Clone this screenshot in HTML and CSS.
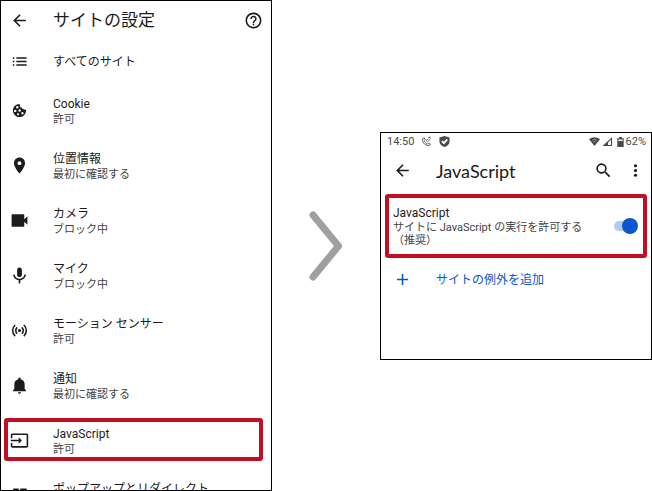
FILE: index.html
```html
<!DOCTYPE html>
<html lang="ja">
<head>
<meta charset="utf-8">
<meta name="viewport" content="width=device-width, initial-scale=1">
<title>サイトの設定</title>
<link rel="stylesheet" href="styles.css">
</head>
<body>
<main class="steps">
  <section class="panel panel-list">
    <header class="bar">
      <button class="icon-button" type="button" aria-label="戻る"><svg class="icon" viewBox="0 0 24 24"><path d="M20 11H7.83l5.59-5.59L12 4l-8 8 8 8 1.41-1.41L7.83 13H20z"/></svg></button>
      <h1 class="title">サイトの設定</h1>
      <button class="icon-button" type="button" aria-label="ヘルプ"><svg class="icon" viewBox="0 0 24 24"><path d="M11 18h2v-2h-2zm1-16C6.48 2 2 6.48 2 12s4.48 10 10 10 10-4.48 10-10S17.52 2 12 2zm0 18c-4.41 0-8-3.59-8-8s3.59-8 8-8 8 3.59 8 8-3.59 8-8 8zm0-14c-2.21 0-4 1.79-4 4h2c0-1.1.9-2 2-2s2 .9 2 2c0 2-3 1.75-3 5h2c0-2.25 3-2.5 3-5 0-2.21-1.79-4-4-4z"/></svg></button>
    </header>
    <nav class="list">
      <a class="item item-single" href="#all">
        <svg class="icon" viewBox="0 0 24 24"><path d="M3.500 6.500h2v2h-2zm0 4.500h2v2h-2zm0 4.500h2v2h-2zM8 6.500h13v2H8zM8 11h13v2H8zm0 4.500h13v2H8z"/></svg>
        <span class="text"><span class="name">すべてのサイト</span></span>
      </a>
      <a class="item" href="#cookie">
        <svg class="icon" viewBox="-1 -1 26 26"><path fill-rule="evenodd" d="M12 3a9 9 0 1 0 9 9c0-.5 0-.8-.1-1.100-.8.3-1.900.2-2.800-.7-1.500.3-2.800-.5-2.800-2.300-1.900.2-3.200-1.300-2.700-3.200-.4-.5-.6-1-.6-1.700zM9 6a1.700 1.700 0 1 1 0 3.400A1.700 1.700 0 0 1 9 6zm-2.800 5a1.600 1.600 0 1 1 0 3.200 1.600 1.600 0 0 1 0-3.200zm6-.6a1.700 1.700 0 1 1 0 3.400 1.700 1.700 0 0 1 0-3.400zM10 15.600a1.500 1.500 0 1 1 0 3 1.500 1.500 0 0 1 0-3zm6-1.400a1.600 1.600 0 1 1 0 3.200 1.600 1.600 0 0 1 0-3.200z"/></svg>
        <span class="text"><span class="name">Cookie</span><span class="note">許可</span></span>
      </a>
      <a class="item" href="#location">
        <svg class="icon" viewBox="0 0 24 24"><path d="M12 2C8.130 2 5 5.130 5 9c0 5.250 7 13 7 13s7-7.750 7-13c0-3.870-3.130-7-7-7zm0 9.500a2.500 2.500 0 0 1 0-5 2.500 2.500 0 0 1 0 5z"/></svg>
        <span class="text"><span class="name">位置情報</span><span class="note">最初に確認する</span></span>
      </a>
      <a class="item" href="#camera">
        <svg class="icon" viewBox="0 0 24 24"><path d="M18 10.500V5c0-.6-.4-1-1-1H3c-.6 0-1 .4-1 1v14c0 .6.400 1 1 1h14c.6 0 1-.4 1-1v-5.500l4 4v-11z"/></svg>
        <span class="text"><span class="name">カメラ</span><span class="note">ブロック中</span></span>
      </a>
      <a class="item" href="#mic">
        <svg class="icon" viewBox="0 0 24 24"><path d="M12 14c1.660 0 3-1.340 3-3V5c0-1.660-1.340-3-3-3S9 3.340 9 5v6c0 1.660 1.340 3 3 3zm6-3.200c0 3.200-2.700 5.400-6 5.400s-6-2.200-6-5.400H4c0 3.700 3 6.700 7 7.300V22h2v-3.900c4-.6 7-3.600 7-7.300z"/></svg>
        <span class="text"><span class="name">マイク</span><span class="note">ブロック中</span></span>
      </a>
      <a class="item" href="#motion">
        <svg class="icon icon-line" viewBox="0 0 24 24"><circle class="dot" cx="12" cy="12" r="2"/><path d="M9 8a5.500 5.500 0 0 0 0 8M15 8a5.500 5.500 0 0 1 0 8M6.500 5a9.500 9.500 0 0 0 0 14M17.500 5a9.500 9.500 0 0 1 0 14"/></svg>
        <span class="text"><span class="name">モーション センサー</span><span class="note">許可</span></span>
      </a>
      <a class="item" href="#notice">
        <svg class="icon" viewBox="0 0 24 24"><path d="M12 22.500c1.100 0 2-.9 2-2h-4c0 1.100.9 2 2 2zM18.500 16v-5.500c0-3.100-1.900-5.700-5-6.400V3.500a1.500 1.500 0 0 0-3 0v.6c-3.100.7-5 3.300-5 6.400V16L4 17.800v1.400h16v-1.400z"/></svg>
        <span class="text"><span class="name">通知</span><span class="note">最初に確認する</span></span>
      </a>
      <a class="item item-marked" href="#javascript">
        <svg class="icon" viewBox="0 0 24 24"><path d="M21 3H3c-1.100 0-2 .9-2 2v4h2V5h18v14H3v-4H1v4c0 1.100.9 2 2 2h18c1.100 0 2-.9 2-2V5c0-1.100-.9-2-2-2zM11 16l4-4-4-4v3H1v2h10z"/></svg>
        <span class="text"><span class="name">JavaScript</span><span class="note">許可</span></span>
      </a>
      <a class="item" href="#popup">
        <svg class="icon" viewBox="0 0 24 24"><path d="M4 3h7v2H4zm9 0h8v2h-8zM4 5h2v14H4zm15 0h2v14h-2zM4 19h17v2H4z"/></svg>
        <span class="text"><span class="name">ポップアップとリダイレクト</span><span class="note">ブロック中</span></span>
      </a>
    </nav>
  </section>

  <svg class="arrow" viewBox="0 0 34 70" aria-hidden="true"><path d="M4 4 29.500 35 4 66"/></svg>

  <section class="panel panel-detail">
    <div class="status">
      <span>14:50</span>
      <svg class="status-icon" viewBox="0 0 12 12"><path class="thin" d="M1.500 3.500c0 4 3 7 7.500 7l1.500-1.500-2.500-1-1 1C5.500 8 4 6.500 3.500 5l1-1-1-2zM5.500 5.500l1.500-2M7 6.500 10.500 3M8 2l2.500-1"/></svg>
      <svg class="status-icon" viewBox="0 0 12 12"><path d="M6 0 11.500 1.500V6c0 3-2.500 5-5.500 6C3 11 .5 9 .5 6V1.500z"/><path class="check" d="m3.200 5.500 2.100 2.200 3.700-4"/></svg>
      <span class="status-end">
        <svg class="status-icon" viewBox="0 0 12 12"><path d="M0 3.500C3.500.5 8.500.5 12 3.500L6 11z"/><path class="cut" d="M4 4.500q2-1.500 4 0M5 6.500q1-.7 2 0"/></svg>
        <svg class="status-icon" viewBox="0 0 12 12"><path d="M11 1v10H1zM9.800 4 6.500 7.300v2.500h3.300z" fill-rule="evenodd"/><path d="M1 11 6 6v5z"/></svg>
        <svg class="battery" viewBox="0 0 7 11"><path fill-rule="evenodd" d="M2 0h3v1.500h2V11H0V1.500h2zM1.200 2.700v1.800h4.600V2.700z"/></svg>
        <span>62%</span>
      </span>
    </div>
    <header class="bar">
      <button class="icon-button" type="button" aria-label="戻る"><svg class="icon" viewBox="0 0 24 24"><path d="M20 11H7.830l5.590-5.590L12 4l-8 8 8 8 1.410-1.410L7.830 13H20z"/></svg></button>
      <h2 class="title">JavaScript</h2>
      <button class="icon-button" type="button" aria-label="検索"><svg class="icon" viewBox="0 0 24 24"><path d="M15.500 14h-.79l-.28-.27A6.500 6.500 0 1 0 13.730 14.430l.27.280v.79l5 4.990L20.490 19zm-6 0a4.500 4.500 0 1 1 0-9 4.500 4.500 0 0 1 0 9z"/></svg></button>
      <button class="icon-button" type="button" aria-label="その他"><svg class="icon" viewBox="0 0 24 24"><circle cx="12" cy="6" r="2"/><circle cx="12" cy="12" r="2"/><circle cx="12" cy="18" r="2"/></svg></button>
    </header>
    <label class="setting" for="js-toggle">
      <span class="text"><span class="name">JavaScript</span><span class="note">サイトに JavaScript の実行を許可する<span class="unbroken">（推奨）</span></span></span>
      <input class="toggle" id="js-toggle" type="checkbox" checked>
    </label>
    <button class="add" type="button">
      <svg class="icon" viewBox="0 0 24 24"><path d="M19 13h-6v6h-2v-6H5v-2h6V5h2v6h6z"/></svg>
      <span class="text">サイトの例外を追加</span>
    </button>
  </section>
</main>
</body>
</html>
```
FILE: styles.css
```css
* {
  box-sizing: border-box;
}

body {
  margin: 0;
  background: #fff;
  color: #1b1b1b;
  font-family: Roboto, "Noto Sans CJK JP", sans-serif;
  font-size: 12px;
  line-height: 16px;
}

button {
  padding: 0;
  border: 0;
  background: none;
  color: inherit;
  font: inherit;
}

.steps {
  display: grid;
  grid-template-columns: 272fr 108fr 272fr;
  align-items: center;
  justify-items: center;
  height: 100vh;
}

.panel {
  width: 100%;
  border: 1px solid #000;
}

.panel-list {
  height: 100%;
  overflow: hidden;
}

.panel-detail {
  padding-bottom: 58px;
}

.icon {
  display: block;
  flex: none;
  width: 19px;
  height: 19px;
  fill: currentColor;
}

.icon-line {
  fill: none;
  stroke: currentColor;
  stroke-width: 2;
}

.icon-line .dot {
  fill: currentColor;
  stroke: none;
}

.bar {
  display: flex;
  align-items: center;
  height: 38px;
  padding: 0 8px 0 9px;
}

.title {
  flex: 1;
  margin: 0 0 0 24px;
  font-size: 17px;
  font-weight: 400;
  line-height: 24px;
}

.item {
  display: flex;
  position: relative;
  align-items: center;
  gap: 24px;
  height: 55px;
  padding: 0 9px;
  color: inherit;
  text-decoration: none;
}

.item-single {
  height: 44px;
}

.item-marked::after {
  content: "";
  position: absolute;
  inset: 5px 8px 7px 3px;
  border: 4px solid #c30d23;
  border-radius: 3px;
}

.text,
.name,
.note {
  display: block;
}

.item .text,
.add .text {
  padding-top: 2px;
}

.note {
  color: #444;
  font-size: 11px;
  line-height: 16px;
}

.arrow {
  width: 34px;
  height: 70px;
  fill: none;
  stroke: #9fa0a0;
  stroke-width: 7;
  stroke-linecap: round;
  stroke-linejoin: round;
}

.status {
  display: flex;
  align-items: center;
  gap: 7px;
  height: 18px;
  padding: 0 5px 0 6px;
  color: #4a4a4a;
  font-size: 11px;
}

.status-icon {
  width: 11px;
  height: 11px;
  fill: currentColor;
}

.status-icon .thin {
  fill: none;
  stroke: currentColor;
}

.status-icon .check {
  fill: none;
  stroke: #fff;
  stroke-width: 2;
}

.status-icon .cut {
  fill: none;
  stroke: #aaa;
}

.battery {
  width: 7px;
  height: 10px;
  margin-left: 2px;
  fill: currentColor;
}

.status-end {
  display: flex;
  align-items: center;
  gap: 2px;
  margin-left: auto;
}

.panel-detail .bar {
  gap: 13px;
  height: 40px;
  padding: 0 6px 0 12px;
}

.panel-detail .title {
  margin-left: 11px;
  font-family: Lato, Roboto, sans-serif;
  font-size: 18px;
}

.setting {
  display: flex;
  align-items: center;
  gap: 16px;
  min-height: 64px;
  margin: 3px 4px 0;
  padding: 0 5px 0 4px;
  border: 4px solid #c30d23;
  border-radius: 3px;
}

.setting .text {
  flex: 1;
}

.setting .note {
  line-height: 13px;
}

.unbroken {
  display: inline-block;
}

.toggle {
  position: relative;
  flex: none;
  width: 24px;
  height: 16px;
  margin: 0;
  appearance: none;
}

.toggle::before,
.toggle::after {
  content: "";
  position: absolute;
}

.toggle::before {
  inset: 3px 4px 3px 0;
  border-radius: 5px;
  background: #b3cbf2;
}

.toggle::after {
  top: 0;
  left: 0;
  width: 16px;
  height: 16px;
  border-radius: 50%;
  background: #0b57d0;
}

.toggle:checked::after {
  left: 8px;
}

.add {
  display: flex;
  align-items: center;
  gap: 24px;
  width: 100%;
  height: 43px;
  padding: 0 12px;
  color: #0b57d0;
}
```
